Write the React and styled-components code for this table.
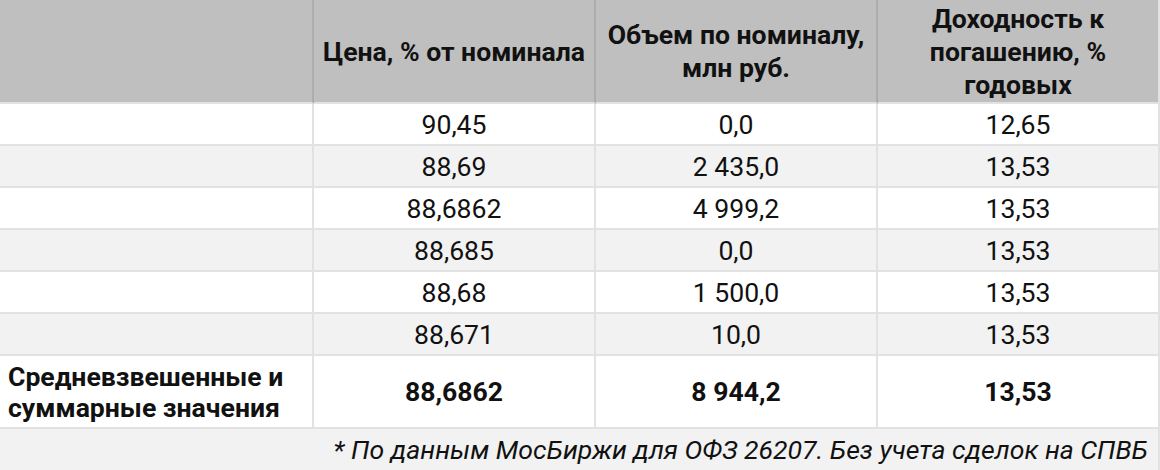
import React from "react";
import styled, { createGlobalStyle } from "styled-components";

const GlobalStyle = createGlobalStyle`
    body {
        margin: 0;
        background: #ffffff;
        font-family: Roboto, "Liberation Sans", Arial, sans-serif;
        color: #111111;
    }
`;

const Table = styled.table`
    width: 1160px;
    table-layout: fixed;
    border-collapse: separate;
    border-spacing: 0;
    font-size: 26.6px;
`;

const Col = styled.col`
    width: ${(p) => p.$w}px;
`;

const HeadCell = styled.th`
    height: 102px;
    padding: 0 5px;
    background: #bfbfbf;
    font-weight: 700;
    line-height: 33px;
    text-align: center;
    vertical-align: middle;
    border-right: 2px solid ${(p) => (p.$last ? "#e2e2e2" : "#adadad")};
    border-bottom: 2px solid #e2e2e2;
`;

const Row = styled.tr`
    background: ${(p) => (p.$alt ? "#f2f2f2" : "#ffffff")};
`;

const Cell = styled.td`
    height: ${(p) => (p.$tall ? 71 : 40)}px;
    padding: ${(p) => (p.$left ? "0 4px 0 8px" : "0 6px")};
    text-align: ${(p) => (p.$left ? "left" : "center")};
    font-weight: ${(p) => (p.$bold ? 700 : 400)};
    line-height: 31px;
    vertical-align: middle;
    border-right: 2px solid #e2e2e2;
    border-bottom: 2px solid #e2e2e2;
`;

const FootCell = styled.td`
    height: 41px;
    padding: 0 10px 0 0;
    background: #f2f2f2;
    text-align: right;
    font-style: italic;
    border-right: 2px solid #e2e2e2;
`;

const rows = [
    ["90,45", "0,0", "12,65"],
    ["88,69", "2 435,0", "13,53"],
    ["88,6862", "4 999,2", "13,53"],
    ["88,685", "0,0", "13,53"],
    ["88,68", "1 500,0", "13,53"],
    ["88,671", "10,0", "13,53"],
];

export default function App() {
    return (
        <>
            <GlobalStyle />
            <Table>
                <colgroup>
                    <Col $w={314} />
                    <Col $w={282} />
                    <Col $w={282} />
                    <Col $w={282} />
                </colgroup>
                <thead>
                    <tr>
                        <HeadCell></HeadCell>
                        <HeadCell>Цена, % от номинала</HeadCell>
                        <HeadCell>Объем по номиналу, млн руб.</HeadCell>
                        <HeadCell $last>Доходность к погашению, % годовых</HeadCell>
                    </tr>
                </thead>
                <tbody>
                    {rows.map((r, i) => (
                        <Row key={i} $alt={i % 2 === 1}>
                            <Cell></Cell>
                            {r.map((v, j) => (
                                <Cell key={j}>{v}</Cell>
                            ))}
                        </Row>
                    ))}
                    <Row>
                        <Cell $left $bold $tall>
                            Средневзвешенные и суммарные значения
                        </Cell>
                        <Cell $bold $tall>88,6862</Cell>
                        <Cell $bold $tall>8 944,2</Cell>
                        <Cell $bold $tall>13,53</Cell>
                    </Row>
                    <tr>
                        <FootCell colSpan={4}>
                            * По данным МосБиржи для ОФЗ 26207. Без учета сделок на СПВБ
                        </FootCell>
                    </tr>
                </tbody>
            </Table>
        </>
    );
}
